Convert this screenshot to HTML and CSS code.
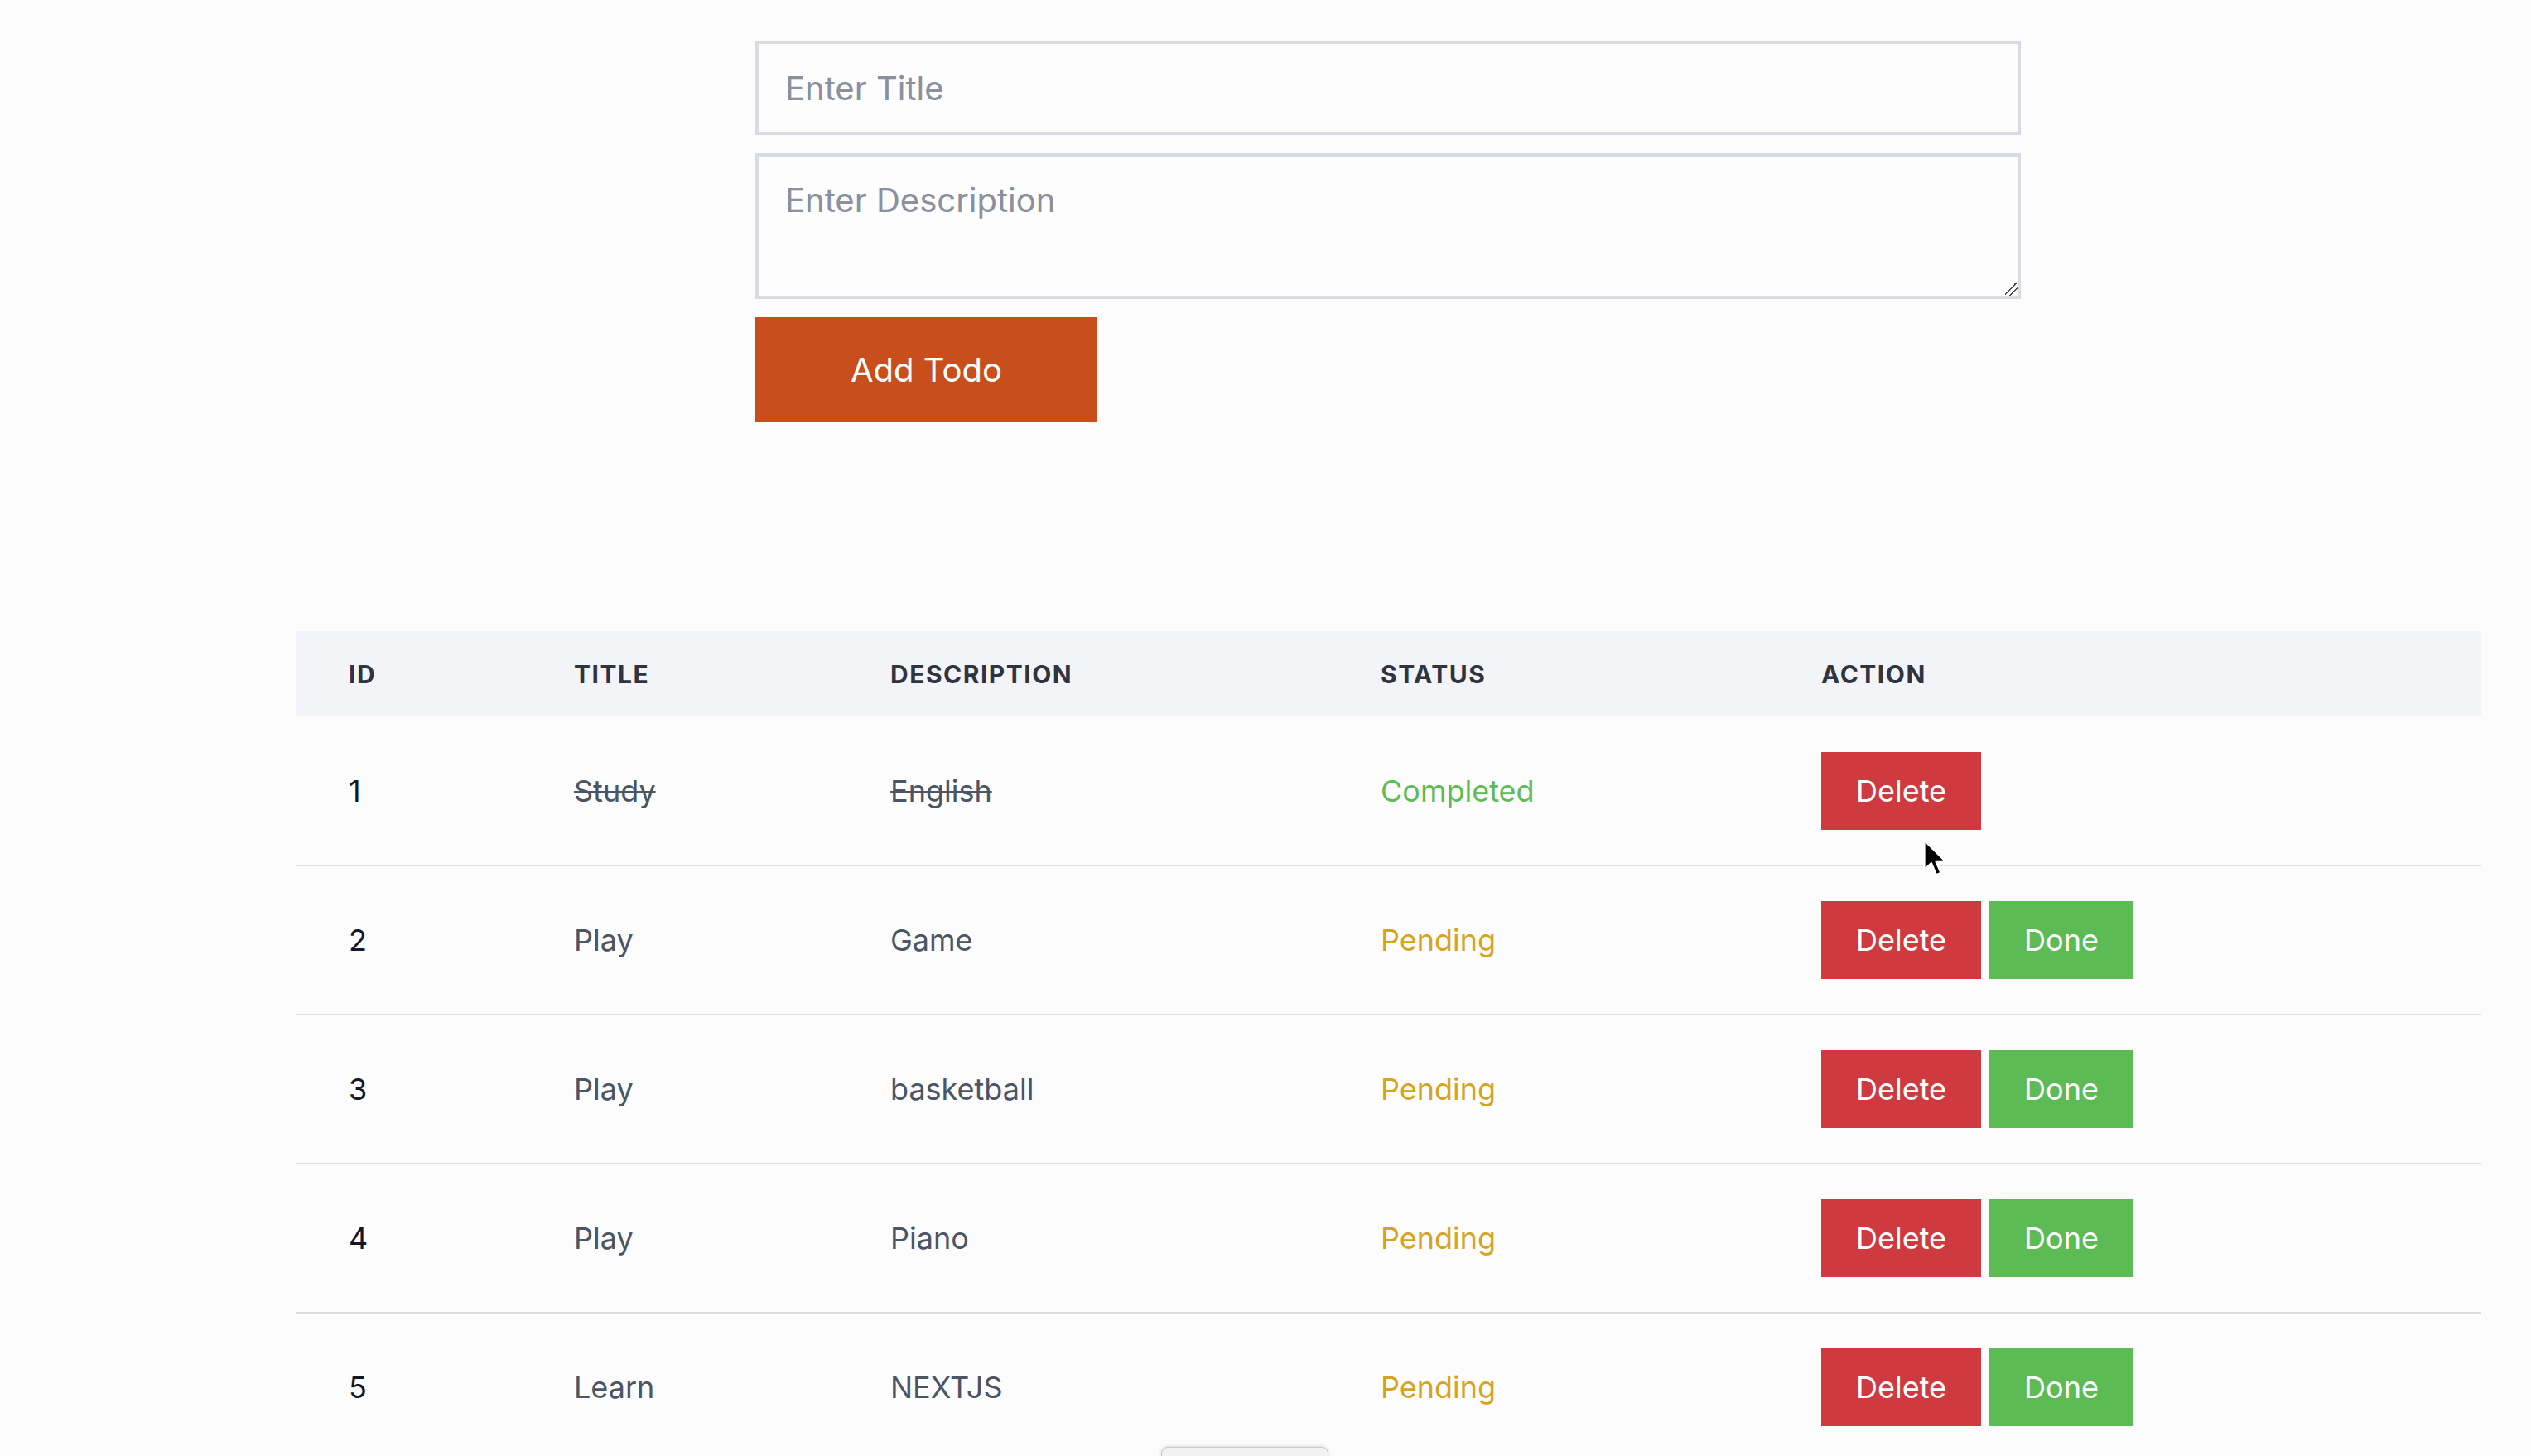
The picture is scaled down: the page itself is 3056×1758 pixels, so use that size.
FILE: index.html
```html
<!DOCTYPE html>
<html lang="en">
<head>
<meta charset="utf-8">
<title>Todo</title>
<link rel="stylesheet" href="styles.css">
</head>
<body>
<main class="page">
  <form class="todo-form">
    <input class="field field-title" type="text" placeholder="Enter Title">
    <textarea class="field field-desc" placeholder="Enter Description"></textarea>
    <div class="form-actions">
      <button class="btn-add" type="button">Add Todo</button>
    </div>
  </form>

  <table class="todo-table">
    <colgroup>
      <col class="col-id">
      <col class="col-title">
      <col class="col-desc">
      <col class="col-status">
      <col class="col-action">
    </colgroup>
    <thead>
      <tr>
        <th>ID</th>
        <th>Title</th>
        <th>Description</th>
        <th>Status</th>
        <th>Action</th>
      </tr>
    </thead>
    <tbody>
      <tr>
        <td class="cell-id">1</td>
        <td class="cell-text done-text">Study</td>
        <td class="cell-text done-text">English</td>
        <td class="status-completed">Completed</td>
        <td><div class="actions"><button class="btn btn-delete" type="button">Delete</button></div></td>
      </tr>
      <tr>
        <td class="cell-id">2</td>
        <td class="cell-text">Play</td>
        <td class="cell-text">Game</td>
        <td class="status-pending">Pending</td>
        <td><div class="actions"><button class="btn btn-delete" type="button">Delete</button><button class="btn btn-done" type="button">Done</button></div></td>
      </tr>
      <tr>
        <td class="cell-id">3</td>
        <td class="cell-text">Play</td>
        <td class="cell-text">basketball</td>
        <td class="status-pending">Pending</td>
        <td><div class="actions"><button class="btn btn-delete" type="button">Delete</button><button class="btn btn-done" type="button">Done</button></div></td>
      </tr>
      <tr>
        <td class="cell-id">4</td>
        <td class="cell-text">Play</td>
        <td class="cell-text">Piano</td>
        <td class="status-pending">Pending</td>
        <td><div class="actions"><button class="btn btn-delete" type="button">Delete</button><button class="btn btn-done" type="button">Done</button></div></td>
      </tr>
      <tr>
        <td class="cell-id">5</td>
        <td class="cell-text">Learn</td>
        <td class="cell-text">NEXTJS</td>
        <td class="status-pending">Pending</td>
        <td><div class="actions"><button class="btn btn-delete" type="button">Delete</button><button class="btn btn-done" type="button">Done</button></div></td>
      </tr>
    </tbody>
  </table>
</main>

<svg class="cursor" width="34" height="50" viewBox="0 0 15 22" aria-hidden="true">
  <path d="M1 1 L1 17 L4.8 13.4 L7.4 19.6 L10 18.5 L7.4 12.4 L12.6 12.4 Z" fill="#000" stroke="#fff" stroke-width="1.2" stroke-linejoin="round"/>
</svg>

<div class="bottom-tab"></div>
</body>
</html>
```

FILE: styles.css
```css
html, body {
  margin: 0;
  padding: 0;
  height: 100%;
  overflow: hidden;
}

body {
  background: #fcfcfd;
  font-family: Inter, "Noto Sans", "DejaVu Sans", sans-serif;
  color: #111827;
}

.page {
  padding-top: 49px;
}

.todo-form {
  margin-left: 912px;
  width: 1528px;
  display: flex;
  flex-direction: column;
  gap: 22px;
}

.field {
  box-sizing: border-box;
  width: 100%;
  border: 4px solid #d8dbe2;
  background: #fdfdfe;
  font-family: Inter, "Noto Sans", sans-serif;
  font-size: 40px;
  line-height: 60px;
  color: #374151;
  padding: 23px 32px;
  margin: 0;
  border-radius: 0;
  outline: none;
}

.field::placeholder {
  color: #8b909c;
}

.field-title {
  height: 114px;
}

.field-desc {
  height: 176px;
  resize: vertical;
  display: block;
}

.field-desc::-webkit-scrollbar {
  width: 22px;
  height: 22px;
}

.field-desc::-webkit-resizer {
  background: linear-gradient(135deg,
    transparent 40%, #4a4a4a 40%, #4a4a4a 47%, transparent 47%,
    transparent 64%, #4a4a4a 64%, #4a4a4a 71%, transparent 71%);
}

.form-actions {
  display: flex;
}

.btn-add {
  height: 126px;
  width: 413px;
  border: none;
  background: #c84e1b;
  color: #fff;
  font-family: Inter, "Noto Sans", sans-serif;
  font-size: 40px;
  padding: 0;
  cursor: pointer;
}

.todo-table {
  margin-top: 253px;
  margin-left: 357px;
  width: 2639px;
  border-collapse: collapse;
  table-layout: fixed;
}

.col-id { width: 272px; }
.col-title { width: 382px; }
.col-desc { width: 592px; }
.col-status { width: 532px; }
.col-action { width: 861px; }

.todo-table thead tr {
  background: #f3f4f7;
  height: 103px;
}

.todo-table th {
  text-align: left;
  padding: 0 0 0 64px;
  font-size: 30px;
  font-weight: 700;
  letter-spacing: 1.5px;
  text-transform: uppercase;
  color: #2f3441;
}

.todo-table tbody tr {
  height: 180px;
  border-bottom: 2px solid #dcdee4;
}

.todo-table td {
  padding: 0 0 0 64px;
  font-size: 36px;
  vertical-align: middle;
}

.cell-id {
  color: #111827;
}

.cell-text {
  color: #4b5563;
}

.done-text {
  text-decoration: line-through;
  text-decoration-thickness: 3px;
}

.status-completed {
  color: #5cbd55;
}

.status-pending {
  color: #d6a31e;
}

.actions {
  display: flex;
  gap: 10px;
}

.btn {
  height: 94px;
  padding: 0 42px;
  border: none;
  color: #fff;
  font-family: Inter, "Noto Sans", sans-serif;
  font-size: 36px;
  cursor: pointer;
}

.btn-delete {
  background: #cf3a40;
}

.btn-done {
  background: #5cbb55;
  padding: 0 42px;
}

.cursor {
  position: absolute;
  left: 2321px;
  top: 1012px;
}

.bottom-tab {
  position: fixed;
  left: 1402px;
  top: 1747px;
  width: 200px;
  height: 30px;
  background: #f2f2f3;
  border: 1px solid #c9c9cc;
  border-radius: 8px;
  box-shadow: 0 -1px 4px rgba(0, 0, 0, 0.12);
}
```
